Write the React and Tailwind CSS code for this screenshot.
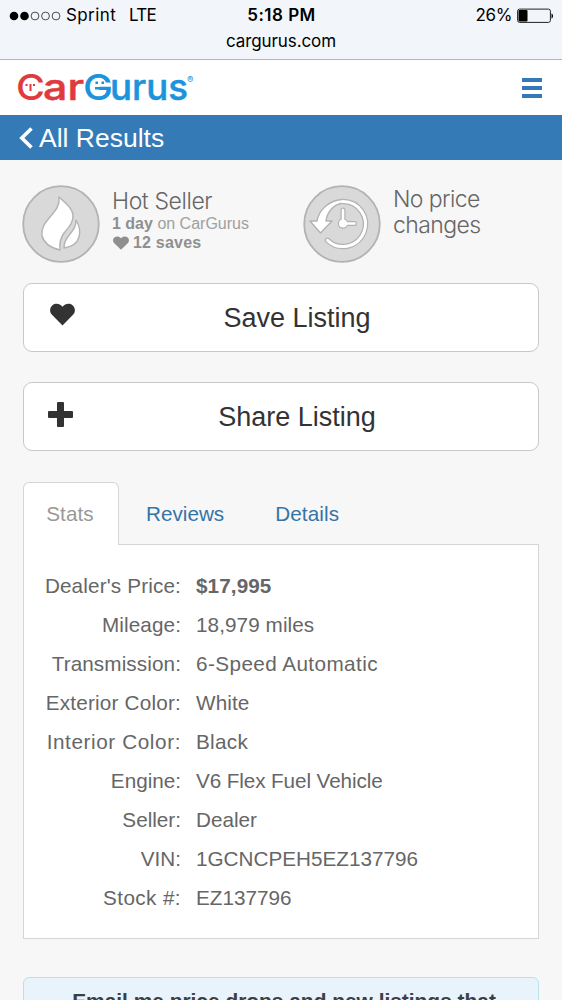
const HEART_PATH = "M12 21.5 1.9 11.3C-.7 8.600-.4 4.300 2.400 2.100 5.300-.2 9.500.4 12 3.600 14.500.4 18.700-.2 21.600 2.100c2.800 2.200 3.100 6.500.5 9.200z";

const stats = [
    { label: "Dealer's Price:", value: "$17,995", labelStyle: "tracking-[0.15px]", valueStyle: "font-bold tracking-[0.1px]" },
    { label: "Mileage:", value: "18,979 miles", labelStyle: "tracking-[0.1px]", valueStyle: "tracking-[0.08px]" },
    { label: "Transmission:", value: "6-Speed Automatic", labelStyle: "tracking-[0.1px]", valueStyle: "tracking-[0.42px]" },
    { label: "Exterior Color:", value: "White", labelStyle: "tracking-[0.2px]", valueStyle: "tracking-[0.1px]" },
    { label: "Interior Color:", value: "Black", labelStyle: "tracking-[0.6px]", valueStyle: "tracking-[0.3px]" },
    { label: "Engine:", value: "V6 Flex Fuel Vehicle", labelStyle: "tracking-normal", valueStyle: "tracking-[-0.1px]" },
    { label: "Seller:", value: "Dealer", labelStyle: "tracking-normal", valueStyle: "tracking-normal" },
    { label: "VIN:", value: "1GCNCPEH5EZ137796", labelStyle: "tracking-normal", valueStyle: "tracking-normal" },
    { label: "Stock #:", value: "EZ137796", labelStyle: "tracking-[0.4px]", valueStyle: "tracking-normal" },
];

function HeartIcon({ className }) {
    return (
        <svg viewBox="0 0 24 22" preserveAspectRatio="none" className={className} fill="currentColor">
            <path d={HEART_PATH} />
        </svg>
    );
}

function StatusBar() {
    return (
        <div className="h-[60px] bg-[#f2f5f9] border-b border-[#b4b6b9] text-black font-['Inter',sans-serif]">
            <div className="h-8 grid grid-cols-[1fr_auto_1fr] items-center pl-[9px] pr-2">
                <div className="flex items-center">
                    <svg width="52" height="10" viewBox="0 0 52 10">
                        <circle cx="5" cy="5" r="4.300" />
                        <circle cx="15.500" cy="5" r="4.300" />
                        <circle cx="26" cy="5" r="3.900" fill="none" stroke="#222" strokeWidth=".8" />
                        <circle cx="36.500" cy="5" r="3.900" fill="none" stroke="#222" strokeWidth=".8" />
                        <circle cx="47" cy="5" r="3.900" fill="none" stroke="#222" strokeWidth=".8" />
                    </svg>
                    <span className="ml-[5px] text-[17px] tracking-[0.4px]">Sprint</span>
                    <span className="ml-[13px] text-[17px] tracking-[-0.8px]">LTE</span>
                </div>
                <div className="text-[17px] font-semibold tracking-[0.5px]">5:18 PM</div>
                <div className="flex items-center justify-end">
                    <span className="text-[17px] tracking-[-0.4px] mr-[5px]">26%</span>
                    <svg width="37" height="16" viewBox="0 0 37 16">
                        <rect x=".6" y="1.100" width="32.800" height="13.300" rx="2" fill="none" stroke="#222" />
                        <rect x="1.500" y="2" width="9" height="11.500" rx="1" />
                        <path d="M34.500 5.500c2 .5 2 4.500 0 5z" />
                    </svg>
                </div>
            </div>
            <div className="text-center text-[17px] leading-[19px] tracking-[-0.1px]">cargurus.com</div>
        </div>
    );
}

function Logo() {
    return (
        <svg width="190" height="55" viewBox="0 0 190 55" className="font-['Inter',sans-serif]">
            <g fill="#e03a3e" fontWeight="500">
                <text x="-1" y="39.500" fontSize="36" textLength="29" lengthAdjust="spacingAndGlyphs">C</text>
                <text x="26" y="39.500" fontSize="36" textLength="41" lengthAdjust="spacingAndGlyphs" stroke="#e03a3e" strokeWidth=".5">ar</text>
                <rect x="8.500" y="24" width="2" height="2" />
                <rect x="16" y="24" width="2" height="2" />
                <rect x="12.500" y="24" width="2" height="7" />
            </g>
            <g fill="#1b94dc" fontWeight="500">
                <text x="66" y="39.500" fontSize="36" textLength="30" lengthAdjust="spacingAndGlyphs">G</text>
                <text x="93" y="39.500" fontSize="36" textLength="78" lengthAdjust="spacingAndGlyphs" stroke="#1b94dc" strokeWidth=".5">urus</text>
                <rect x="78.500" y="21.500" width="2.500" height="2.500" />
                <rect x="84.500" y="21.500" width="2.500" height="2.500" />
                <rect x="78" y="27" width="6" height="2.500" />
            </g>
            <text x="170" y="23" fontSize="9.500" fill="#1b94dc">®</text>
        </svg>
    );
}

function Header() {
    return (
        <div className="h-[55px] bg-white flex items-center justify-between pl-[17px] pr-5">
            <Logo />
            <div className="w-5 flex flex-col gap-1">
                <div className="h-1 bg-[#337ab7]" />
                <div className="h-1 bg-[#337ab7]" />
                <div className="h-1 bg-[#337ab7]" />
            </div>
        </div>
    );
}

function HotBadge() {
    return (
        <svg width="78" height="78" viewBox="0 0 78 78" className="shrink-0">
            <circle cx="39" cy="39" r="37.800" fill="#d9d9d9" stroke="#b3b3b3" strokeWidth="1.800" />
            <g fill="#fff" stroke="#b3b3b3" strokeWidth="1.400" strokeLinejoin="round">
                <path d="M37 12c1 9-4 14-9 20-6 7-9 12-8 19 2 7 9 12 18 14-1-7 0-11 4-17 5-6 9-10 9-17 0-8-8-13-14-19z" />
                <path d="M54 35c0 6-2 9-6 14-4 5-6 8-6 14 8-1 13-4 15-11 2-7 0-12-3-17z" />
            </g>
        </svg>
    );
}

function PriceBadge() {
    return (
        <svg width="78" height="78" viewBox="0 0 78 78" className="shrink-0">
            <circle cx="39" cy="39" r="37.800" fill="#d9d9d9" stroke="#b3b3b3" strokeWidth="1.800" />
            <g fill="none" strokeLinecap="round">
                <path d="M40 16.500a22.500 22.500 0 1 1-15.500 38.800" stroke="#b3b3b3" strokeWidth="5.500" />
                <path d="M40 25v13.500h11.500" stroke="#b3b3b3" strokeWidth="5" />
            </g>
            <circle cx="40" cy="38.500" r="5.200" fill="#b3b3b3" />
            <path
                d="M40 14.500C27 15 16 24 14 36H7l10.500 12L29 36h-6c1-9 8-17 17-18z"
                fill="#fff"
                stroke="#b3b3b3"
                strokeWidth="1.400"
                strokeLinejoin="round"
            />
            <g fill="none" stroke="#fff" strokeWidth="3" strokeLinecap="round">
                <path d="M39.500 16.500H40a22.500 22.500 0 1 1-15.500 38.800" />
                <path d="M40 25v13.500h11.500" strokeWidth="2.600" />
            </g>
            <circle cx="40" cy="38.500" r="4" fill="#fff" />
        </svg>
    );
}

function Highlights() {
    return (
        <div className="flex h-[78px] -ml-px">
            <div className="w-[281px] flex">
                <HotBadge />
                <div className="ml-3 pt-[3px] text-[#8f8f8f]">
                    <div className="text-[23px] leading-[26px] text-[#666] font-light font-['Inter',sans-serif] tracking-[-0.4px]">Hot Seller</div>
                    <div className="text-[16px] leading-[19px] whitespace-nowrap">
                        <b>1 day</b> <span className="text-[#a0a0a0]">on CarGurus</span>
                    </div>
                    <div className="flex items-center text-[16px] leading-[19px] font-bold tracking-[0.2px]">
                        <HeartIcon className="w-4 h-[14px] ml-px mr-1" />
                        12 saves
                    </div>
                </div>
            </div>
            <PriceBadge />
            <div className="ml-3 pt-px w-[110px] text-[23px] leading-[26px] text-[#666] font-light font-['Inter',sans-serif] tracking-[-0.6px]">
                No price changes
            </div>
        </div>
    );
}

function ActionButton({ icon, label, className }) {
    return (
        <button className={`relative block w-full h-[69px] rounded-[9px] border-[1.5px] border-[#c8c8c8] bg-white text-[27px] text-[#333] ${className}`}>
            {icon}
            <span className="block pl-8 pt-[3px]">{label}</span>
        </button>
    );
}

function Tabs() {
    return (
        <div className="flex h-[62px] text-[20.7px] leading-[64px] text-[#3474a8]">
            <div className="relative z-10 w-24 h-[63px] rounded-t-[6px] border border-b-0 border-[#d5d5d5] bg-white text-center leading-[62px] text-[#999]">
                <span className="pr-0.5 tracking-[0.1px]">Stats</span>
            </div>
            <div className="ml-[27px]">Reviews</div>
            <div className="ml-[51px] tracking-[0.1px]">Details</div>
        </div>
    );
}

function StatsPanel() {
    return (
        <div className="h-[395px] border border-[#d5d5d5] bg-white pt-[21px] text-[20.7px] leading-[39px] text-[#666]">
            {stats.map((row) => (
                <div key={row.label} className="flex">
                    <div className={`w-[157px] text-right ${row.labelStyle}`}>{row.label}</div>
                    <div className={`ml-[15px] ${row.valueStyle}`}>{row.value}</div>
                </div>
            ))}
        </div>
    );
}

export default function App() {
    return (
        <div className="w-[562px] h-[1000px] overflow-hidden bg-[#f7f7f7] font-['Liberation_Sans',Arial,sans-serif]">
            <StatusBar />
            <Header />
            <div className="h-[45px] bg-[#337ab7] text-white flex items-center pl-[19px]">
                <svg width="14" height="22" viewBox="0 0 14 22" fill="none" stroke="#fff" strokeWidth="3.600">
                    <path d="M12.500 1.500 2.800 11l9.700 9.500" />
                </svg>
                <span className="ml-[6px] pt-0.5 text-[26.5px]">All Results</span>
            </div>
            <div className="px-[23px] pt-[25px]">
                <Highlights />
                <ActionButton
                    className="mt-[19.5px]"
                    label="Save Listing"
                    icon={<HeartIcon className="absolute left-[26px] top-[19px] w-[25px] h-[23px]" />}
                />
                <ActionButton
                    className="mt-[30px]"
                    label="Share Listing"
                    icon={
                        <svg className="absolute left-6 top-[19px]" width="25" height="25" viewBox="0 0 25 25" fill="currentColor">
                            <rect x="9" y="0" width="7" height="25" rx="1" />
                            <rect x="0" y="9" width="25" height="7" rx="1" />
                        </svg>
                    }
                />
                <div className="mt-[31.5px]">
                    <Tabs />
                    <StatsPanel />
                </div>
                <div className="mt-[38px] h-[100px] rounded-[6px] border border-[#bce0ea] bg-[#e8f3fb] pt-[11px] pl-1.5 whitespace-nowrap text-center text-[20.9px] leading-[24px] font-bold text-[#3c4045]">
                    Email me price drops and new listings that
                </div>
            </div>
        </div>
    );
}
